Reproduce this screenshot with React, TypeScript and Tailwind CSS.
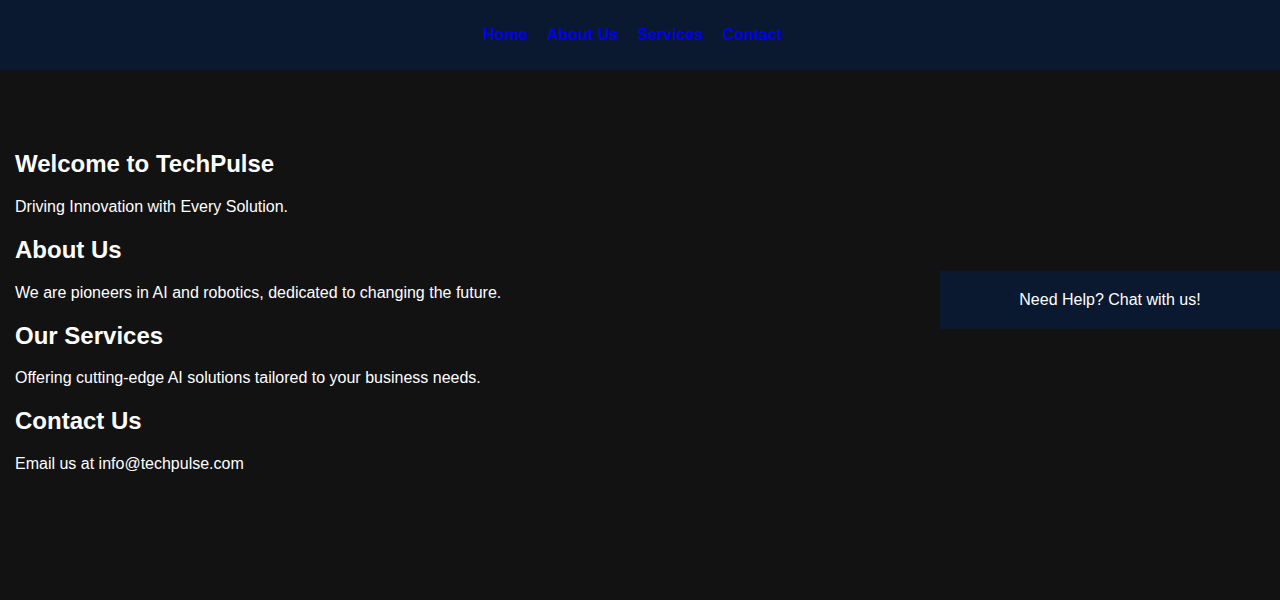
export default function App() {
  const links = ["Home", "About Us", "Services", "Contact"];
  const sections = [
    { title: "Welcome to TechPulse", text: "Driving Innovation with Every Solution." },
    { title: "About Us", text: "We are pioneers in AI and robotics, dedicated to changing the future." },
    { title: "Our Services", text: "Offering cutting-edge AI solutions tailored to your business needs." },
    { title: "Contact Us", text: "Email us at info@techpulse.com" },
  ];

  return (
    <div className="min-h-screen bg-[#121212] text-white font-['Liberation_Sans',Arial,sans-serif] leading-[normal]">
      {/* Header */}
      <header className="h-[70px] bg-[#0a192f] flex items-center justify-center">
        <nav className="flex mr-[14px]">
          {links.map((l) => (
            <a key={l} href="#" className="mx-[9.67px] text-base leading-[normal] font-bold text-[#0000ee]">
              {l}
            </a>
          ))}
        </nav>
      </header>

      {/* Content */}
      <main className="pt-[60px] px-[15px]">
        {sections.map((s) => (
          <section key={s.title}>
            <h2 className="text-2xl leading-[normal] font-bold my-[19.92px]">{s.title}</h2>
            <p className="text-base leading-[normal] my-4">{s.text}</p>
          </section>
        ))}
      </main>

      {/* Chat box */}
      <div className="fixed right-0 top-1/2 -translate-y-1/2 w-[340px] bg-[#0a192f] p-5 text-center text-base leading-[normal]">
        Need Help? Chat with us!
      </div>
    </div>
  );
}
